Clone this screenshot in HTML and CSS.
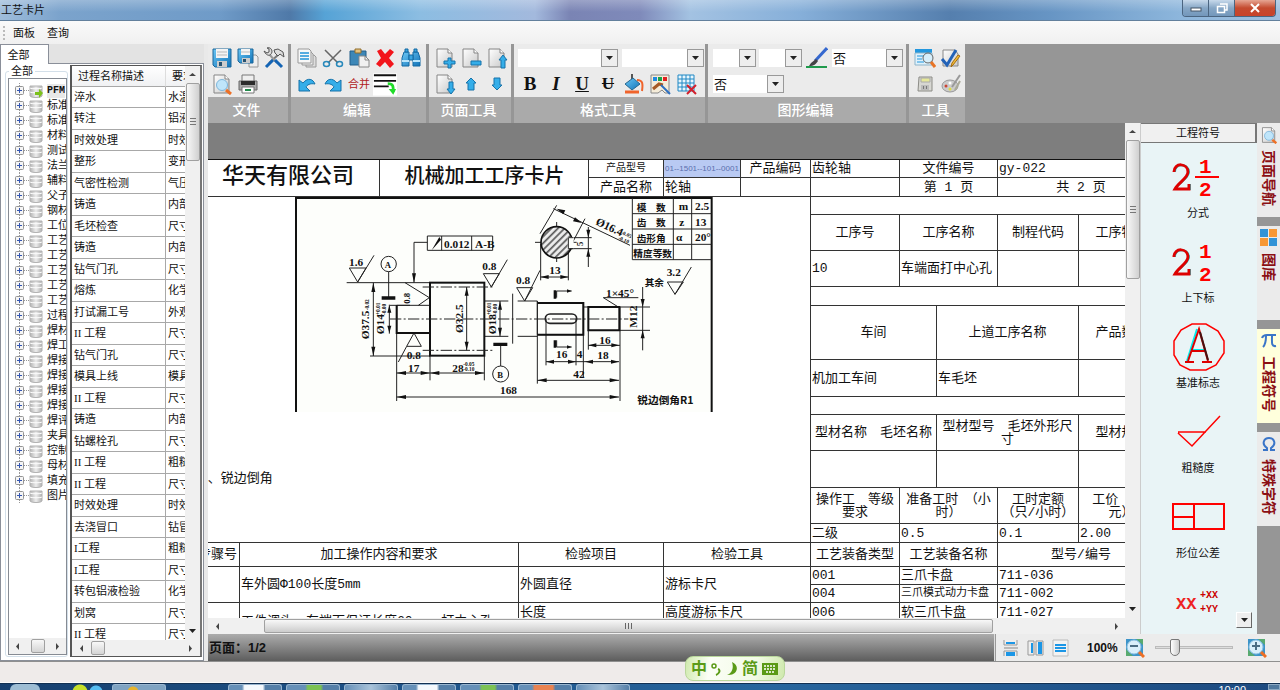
FILE: index.html
```html
<!DOCTYPE html>
<html lang="zh-CN">
<head>
<meta charset="utf-8">
<title>工艺卡片</title>
<link rel="stylesheet" href="styles.css">
</head>
<body>
<svg class="defs" width="0" height="0" aria-hidden="true">
  <defs>
    <linearGradient id="gBlue" x1="0" y1="0" x2="1" y2="1"><stop offset="0" stop-color="#6cc7f5"/><stop offset="1" stop-color="#1173b8"/></linearGradient>
    <linearGradient id="gPage" x1="0" y1="0" x2="1" y2="1"><stop offset="0" stop-color="#fff"/><stop offset="1" stop-color="#c9c9c9"/></linearGradient>
    <linearGradient id="gDb" x1="0" y1="0" x2="1" y2="0"><stop offset="0" stop-color="#b4b4b4"/><stop offset=".5" stop-color="#ededed"/><stop offset="1" stop-color="#b0b0b0"/></linearGradient>
    <pattern id="hatch" width="14" height="14" patternUnits="userSpaceOnUse" patternTransform="rotate(45)"><rect width="14" height="14" fill="#eee"/><path d="M5 0V14" stroke="#555" stroke-width="5"/></pattern>
    <symbol id="page" viewBox="0 0 22 22"><path d="M3 2h11l4 4v14H3z" fill="url(#gPage)" stroke="#858585"/><path d="M14 2v4h4" fill="#fff" stroke="#858585"/></symbol>
    <symbol id="save" viewBox="0 0 22 22"><path d="M2 2h18v18H4l-2-2z" fill="url(#gBlue)" stroke="#1c6699"/><path d="M5 2h12v9H5z" fill="#f4f4f4"/><path d="M6 5h10M6 8h10" stroke="#b9b9b9"/><path d="M6 14h10v6H6z" fill="#ccc"/><path d="M8 15h3v4H8z" fill="#285270"/></symbol>
    <symbol id="saveall" viewBox="0 0 22 22"><path d="M12 8h7l2 2v10h-9z" fill="#eee" stroke="#999"/><path d="M1 2h15v14H3l-2-2z" fill="url(#gBlue)" stroke="#1c6699"/><path d="M4 2h9v6H4z" fill="#f4f4f4"/><path d="M4 5h9" stroke="#bbb"/><path d="M5 11h8v5H5z" fill="#ccc"/><path d="M6 12h3v3H6z" fill="#285270"/></symbol>
    <symbol id="tools" viewBox="0 0 22 22"><path d="M15 8L6 16" stroke="#777" stroke-width="2"/><path d="M6 7l8 9" stroke="#999" stroke-width="2"/><path d="M12 13l7 7M10 13l-7 7" stroke="#1464b4" stroke-width="3"/><path d="M1 4l3 2 2-1V2L4 1c3-1 5 1 5 4-1 4-5 5-8-1z" fill="#ddd" stroke="#555"/><path d="M11 3l4-1 5 3 1 5-4-3-2 2-3-3z" fill="#ddd" stroke="#555"/></symbol>
    <symbol id="preview" viewBox="0 0 22 22"><use href="#page"/><circle cx="11" cy="12" r="5.500" fill="#bfe5fa" stroke="#7db6dc"/><path d="M15 17l5 4" stroke="#ee7026" stroke-width="3"/></symbol>
    <symbol id="print" viewBox="0 0 22 22"><path d="M5 2h12v7H5z" fill="#eee" stroke="#777"/><path d="M2 8h18v9H2z" fill="#aaa" stroke="#666"/><path d="M4 8h14v4H4z" fill="#2c2c2c"/><path d="M5 14h12v6H5z" fill="#fff" stroke="#777"/><path d="M8 16h6v2H8z" fill="#228b4b"/></symbol>
    <symbol id="copy" viewBox="0 0 22 22"><path d="M10 8h8l2 2v10H10z" fill="#ddd" stroke="#999"/><path d="M6 5h9l2 2v11H6z" fill="#eee" stroke="#999"/><path d="M2 2h11l2 2v12H2z" fill="#f8f8f8" stroke="#999"/><path d="M4 6h9M4 9h9M4 12h9" stroke="#2092d8" stroke-width="1.500"/></symbol>
    <symbol id="cut" viewBox="0 0 22 22"><path d="M3 3l13 13M19 3L6 16" stroke="#666" stroke-width="1.500"/><ellipse cx="4.500" cy="17" rx="3" ry="2.500" fill="none" stroke="#2889bb" stroke-width="1.500"/><ellipse cx="17.500" cy="17" rx="3" ry="2.500" fill="none" stroke="#2889bb" stroke-width="1.500"/></symbol>
    <symbol id="paste" viewBox="0 0 22 22"><path d="M2 4h16v14H2z" fill="#3d87b7" stroke="#225f8a"/><path d="M7 2h6v4H7z" fill="#e6c27d" stroke="#8e6d2c"/><path d="M11 9h6l4 4v7H11z" fill="#f1f1f1" stroke="#888"/><path d="M17 9v4h4" fill="none" stroke="#888"/></symbol>
    <symbol id="del" viewBox="0 0 22 22"><path d="M3 4l4-2 4 5 5-5 4 3-5 6 5 6-4 4-5-6-5 5-4-3 5-6z" fill="#f2151b"/></symbol>
    <symbol id="find" viewBox="0 0 22 22"><path d="M4 5h5v14H2v-8zM13 5h5l2 6v8h-7z" fill="url(#gBlue)" stroke="#1268a2"/><path d="M5 2h3v3H5zM14 2h3v3h-3zM9 8h4v5H9z" fill="#3ba6e0" stroke="#1268a2"/><path d="M2 14h7M13 14h7" stroke="#b8e4fb" stroke-width="2"/></symbol>
    <symbol id="undo" viewBox="0 0 22 22"><path d="M3 7v11h11l-4-4c1-2 4-4 9-3-2-5-7-7-12-1z" fill="#35aee9" stroke="#1673aa"/></symbol>
    <symbol id="redo" viewBox="0 0 22 22"><path d="M19 7v11H8l4-4c-1-2-4-4-9-3 2-5 7-7 12-1z" fill="#35aee9" stroke="#1673aa"/></symbol>
    <symbol id="wrap" viewBox="0 0 26 24"><path d="M0 0h26v24H0z" fill="#fff"/><path d="M1 2h24M1 8h24M1 14h16" stroke="#111" stroke-width="2"/><path d="M16 11c6 0 6 3 6 9" fill="none" stroke="#20dc29" stroke-width="3"/><path d="M17 17l5 6 3-6z" fill="#20dc29"/></symbol>
    <symbol id="up" viewBox="0 0 22 22"><path d="M11 5l5 5h-2v7H8v-7H6z" fill="#35aee9" stroke="#1673aa"/></symbol>
    <symbol id="down" viewBox="0 0 22 22"><path d="M11 17l5-5h-2V5H8v7H6z" fill="#35aee9" stroke="#1673aa"/></symbol>
    <symbol id="pgadd" viewBox="0 0 22 22"><use href="#page"/><path d="M14 11h3v3h4v3h-4v4h-3v-4h-4v-3h4z" fill="#35aee9" stroke="#1673aa"/></symbol>
    <symbol id="pgdel" viewBox="0 0 22 22"><use href="#page"/><path d="M11 14h10v4H11z" fill="#35aee9" stroke="#1673aa"/></symbol>
    <symbol id="pgup" viewBox="0 0 22 22"><use href="#page"/><path d="M17 8l4 5h-2v8h-4v-8h-2z" fill="#35aee9" stroke="#1673aa"/></symbol>
    <symbol id="pgdown" viewBox="0 0 22 22"><use href="#page"/><path d="M17 21l4-5h-2V9h-4v7h-2z" fill="#35aee9" stroke="#1673aa"/></symbol>
    <symbol id="fill" viewBox="0 0 22 22"><path d="M9 1v8" stroke="#555" stroke-width="2"/><path d="M2 11l8-6 7 6-8 6z" fill="url(#gBlue)" stroke="#27678f"/><path d="M14 7c6 0 6 4 5 11" fill="none" stroke="#f0642c" stroke-width="2"/><path d="M2 19h14" stroke="#f0642c" stroke-width="3"/></symbol>
    <symbol id="pick" viewBox="0 0 22 22"><path d="M2 2h18v18h-4l-3-3-4 3H2z" fill="#f5ecd9" stroke="#888"/><path d="M4 4h4v4H4z" fill="#208ae0"/><path d="M9 4h4v4H9z" fill="#17a34a"/><path d="M14 4h4v4h-4z" fill="#e02020"/><path d="M4 16l6-5 4 1" fill="none" stroke="#a65a25" stroke-width="3"/><path d="M12 12l9 9" stroke="#2c6fc2" stroke-width="2"/></symbol>
    <symbol id="griddel" viewBox="0 0 22 22"><path d="M3 2h16v16H3z" fill="#e8f6fd" stroke="#2088c4"/><path d="M3 6h16M3 10h16M3 14h16M7 2v16M11 2v16M15 2v16" stroke="#2088c4"/><path d="M12 12l9 9M21 12l-9 9" stroke="#d2202c" stroke-width="2"/></symbol>
    <symbol id="pen" viewBox="0 0 22 22"><path d="M21 1L9 14" stroke="#3568cf" stroke-width="3"/><path d="M10 12l-5 4-2 3c5 0 7-2 9-5z" fill="#444"/><path d="M0 20h21" stroke="#1f9a4c" stroke-width="2"/></symbol>
    <symbol id="search" viewBox="0 0 22 22"><path d="M1 2h17v4H1z" fill="#2397de"/><path d="M1 6h17v12H1z" fill="#dff1fb" stroke="#8db4ca"/><path d="M3 9h7M3 12h5M3 15h7" stroke="#2397de"/><circle cx="14" cy="11" r="5" fill="#d7effb" stroke="#666"/><path d="M17 15l4 5" stroke="#e87426" stroke-width="3"/></symbol>
    <symbol id="check" viewBox="0 0 22 22"><path d="M3 3h12l3 4v12H3z" fill="url(#gPage)" stroke="#888"/><path d="M2 12l5 6L16 3" fill="none" stroke="#2262b8" stroke-width="3"/><path d="M20 9l-7 9-2 2 1-4 6-8z" fill="#f3bd37" stroke="#a36b12"/></symbol>
    <symbol id="disk" viewBox="0 0 22 22"><path d="M5 4h13v14H4z" fill="#d7d7d2" stroke="#8b8b86"/><path d="M7 5h9v4H7z" fill="#e6e89a" stroke="#aaa"/><path d="M7 12h8v5H7z" fill="#bbb"/><path d="M9 13h1v3H9zM12 13h1v3h-1z" fill="#777"/></symbol>
    <symbol id="palette" viewBox="0 0 22 22"><ellipse cx="10" cy="13" rx="8" ry="6" fill="#ccc" stroke="#999"/><circle cx="6" cy="13" r="1.500" fill="#c43"/><circle cx="10" cy="16" r="1.500" fill="#dd4"/><circle cx="10" cy="10" r="1.500" fill="#fff"/><path d="M20 2L12 14" stroke="#999" stroke-width="2"/><path d="M20 8l-5 9" stroke="#aa9" stroke-width="2"/></symbol>
    <symbol id="db" viewBox="0 0 14 14"><path d="M1 2h12v10c-1 2-11 2-12 0z" fill="url(#gDb)" stroke="#b2b2b2"/><path d="M1 4c1 1 11 1 12 0M1 8c1 1 11 1 12 0" fill="none" stroke="#fff"/></symbol>
    <symbol id="plus" viewBox="0 0 15 15"><path d="M5.500 0v3M5.500 12v3" stroke="#999" stroke-dasharray="1 1"/><path d="M10 7.500h5" stroke="#999" stroke-dasharray="1 1"/><rect x="1.500" y="3.500" width="8" height="8" rx="1" fill="#f5f5f5" stroke="#949494"/><path d="M3 7.500h5M5.500 5v5" stroke="#3355b0"/></symbol>
    <symbol id="zoomout" viewBox="0 0 20 20"><path d="M1 1h17v17H1z" fill="#3d94c9"/><path d="M1 11v7h7zM11 1h7v6z" fill="#58aa70"/><circle cx="9" cy="9" r="7" fill="#d9effb" stroke="#8cc1e2"/><path d="M5 8h8" stroke="#4b6d84" stroke-width="2"/><path d="M14 14l5 5" stroke="#ee6f25" stroke-width="3"/></symbol>
    <symbol id="zoomin" viewBox="0 0 20 20"><use href="#zoomout"/><path d="M9 4v8" stroke="#4b6d84" stroke-width="2"/></symbol>
    <symbol id="al" viewBox="0 0 7 9"><path d="M5 1v7L2 4.500z" fill="#444"/></symbol>
    <symbol id="ar" viewBox="0 0 7 9"><path d="M2 1v7l3-3.500z" fill="#444"/></symbol>
    <symbol id="au" viewBox="0 0 9 6"><path d="M1 4h7L4.500 1z" fill="#444"/></symbol>
    <symbol id="ad" viewBox="0 0 9 6"><path d="M1 1h7L4.500 5z" fill="#222"/></symbol>
  </defs>
</svg>

<header class="titlebar">
  <h1>工艺卡片</h1>
  <div class="winbtns">
    <button class="wb" aria-label="最小化"><svg width="12" height="10"><rect x="1" y="5" width="10" height="3" fill="#fff" stroke="#456"/></svg></button>
    <button class="wb" aria-label="还原"><svg width="12" height="11"><path d="M4 1h7v6H9M1.500 3.500h7v6h-7z" fill="none" stroke="#fff" stroke-width="1.500"/></svg></button>
    <button class="wb close" aria-label="关闭"><svg width="12" height="10"><path d="M2 1l8 8M10 1L2 9" stroke="#fff" stroke-width="2"/></svg></button>
  </div>
</header>
<nav class="menubar"><span class="grip"></span><button>面板</button><button>查询</button></nav>

<main class="main">
  <aside class="side">
    <div class="sidetabs"><button class="sidetab">全部</button></div>
    <div class="sidebody">
      <fieldset class="group">
        <legend>全部</legend>
        <div class="treebox">
          <ul class="tree">
            <li><svg class="ex"><use href="#plus"/></svg><svg class="db"><use href="#db"/><path d="M6 8h4V5l4 4-4 5v-3H6z" fill="#7cc11c"/></svg><b>PFM</b></li>
            <li><svg class="ex"><use href="#plus"/></svg><svg class="db"><use href="#db"/></svg>标准</li>
            <li><svg class="ex"><use href="#plus"/></svg><svg class="db"><use href="#db"/></svg>标准</li>
            <li><svg class="ex"><use href="#plus"/></svg><svg class="db"><use href="#db"/></svg>材料</li>
            <li><svg class="ex"><use href="#plus"/></svg><svg class="db"><use href="#db"/></svg>测试</li>
            <li><svg class="ex"><use href="#plus"/></svg><svg class="db"><use href="#db"/></svg>法兰</li>
            <li><svg class="ex"><use href="#plus"/></svg><svg class="db"><use href="#db"/></svg>辅料</li>
            <li><svg class="ex"><use href="#plus"/></svg><svg class="db"><use href="#db"/></svg>父子</li>
            <li><svg class="ex"><use href="#plus"/></svg><svg class="db"><use href="#db"/></svg>钢材</li>
            <li><svg class="ex"><use href="#plus"/></svg><svg class="db"><use href="#db"/></svg>工位</li>
            <li><svg class="ex"><use href="#plus"/></svg><svg class="db"><use href="#db"/></svg>工艺</li>
            <li><svg class="ex"><use href="#plus"/></svg><svg class="db"><use href="#db"/></svg>工艺</li>
            <li><svg class="ex"><use href="#plus"/></svg><svg class="db"><use href="#db"/></svg>工艺</li>
            <li><svg class="ex"><use href="#plus"/></svg><svg class="db"><use href="#db"/></svg>工艺</li>
            <li><svg class="ex"><use href="#plus"/></svg><svg class="db"><use href="#db"/></svg>工艺</li>
            <li><svg class="ex"><use href="#plus"/></svg><svg class="db"><use href="#db"/></svg>过程</li>
            <li><svg class="ex"><use href="#plus"/></svg><svg class="db"><use href="#db"/></svg>焊材</li>
            <li><svg class="ex"><use href="#plus"/></svg><svg class="db"><use href="#db"/></svg>焊工</li>
            <li><svg class="ex"><use href="#plus"/></svg><svg class="db"><use href="#db"/></svg>焊接</li>
            <li><svg class="ex"><use href="#plus"/></svg><svg class="db"><use href="#db"/></svg>焊接</li>
            <li><svg class="ex"><use href="#plus"/></svg><svg class="db"><use href="#db"/></svg>焊接</li>
            <li><svg class="ex"><use href="#plus"/></svg><svg class="db"><use href="#db"/></svg>焊接</li>
            <li><svg class="ex"><use href="#plus"/></svg><svg class="db"><use href="#db"/></svg>焊评</li>
            <li><svg class="ex"><use href="#plus"/></svg><svg class="db"><use href="#db"/></svg>夹具</li>
            <li><svg class="ex"><use href="#plus"/></svg><svg class="db"><use href="#db"/></svg>控制</li>
            <li><svg class="ex"><use href="#plus"/></svg><svg class="db"><use href="#db"/></svg>母材</li>
            <li><svg class="ex"><use href="#plus"/></svg><svg class="db"><use href="#db"/></svg>填充</li>
            <li><svg class="ex"><use href="#plus"/></svg><svg class="db"><use href="#db"/></svg>图片</li>
          </ul>
          <div class="hbar"><svg width="7" height="9"><use href="#al"/></svg><i class="thumb small"></i><svg width="7" height="9"><use href="#ar"/></svg></div>
        </div>
      </fieldset>
      <section class="proc">
        <div class="proctop">
          <div class="procview">
            <table class="proctable">
              <colgroup><col class="pc1"><col class="pc2"></colgroup>
              <thead><tr><th>过程名称描述</th><th>要求</th></tr></thead>
              <tbody>
                <tr><td>淬水</td><td>水温</td></tr>
                <tr><td>转注</td><td>铝液</td></tr>
                <tr><td>时效处理</td><td>时效</td></tr>
                <tr><td>整形</td><td>变形</td></tr>
                <tr><td>气密性检测</td><td>气压</td></tr>
                <tr><td>铸造</td><td>内部</td></tr>
                <tr><td>毛坯检查</td><td>尺寸</td></tr>
                <tr><td>铸造</td><td>内部</td></tr>
                <tr><td>钻气门孔</td><td>尺寸</td></tr>
                <tr><td>熔炼</td><td>化学</td></tr>
                <tr><td>打试漏工号</td><td>外观</td></tr>
                <tr><td>II 工程</td><td>尺寸</td></tr>
                <tr><td>钻气门孔</td><td>尺寸</td></tr>
                <tr><td>模具上线</td><td>模具</td></tr>
                <tr><td>II 工程</td><td>尺寸</td></tr>
                <tr><td>铸造</td><td>内部</td></tr>
                <tr><td>钻螺栓孔</td><td>尺寸</td></tr>
                <tr><td>II 工程</td><td>粗糙</td></tr>
                <tr><td>II 工程</td><td>尺寸</td></tr>
                <tr><td>时效处理</td><td>时效</td></tr>
                <tr><td>去浇冒口</td><td>钻冒</td></tr>
                <tr><td>I工程</td><td>粗糙</td></tr>
                <tr><td>I工程</td><td>尺寸</td></tr>
                <tr><td>转包铝液检验</td><td>化学</td></tr>
                <tr><td>划窝</td><td>尺寸</td></tr>
                <tr><td>II 工程</td><td>尺寸</td></tr>
              </tbody>
            </table>
          </div>
          <div class="vbar"><svg width="9" height="6"><use href="#au"/></svg><i class="vthumb ptall"></i><svg class="end" width="9" height="6"><use href="#ad"/></svg></div>
        </div>
        <div class="hbar"><svg width="7" height="9"><use href="#al"/></svg><i class="thumb small"></i><svg class="right" width="7" height="9"><use href="#ar"/></svg></div>
      </section>
    </div>
  </aside>

  <div class="content">
    <div class="ribbon">
      <section class="rgroup w-file">
        <div class="tools">
          <div class="trow"><button class="tb" aria-label="保存"><svg><use href="#save"/></svg></button><button class="tb" aria-label="全部保存"><svg><use href="#saveall"/></svg></button><button class="tb" aria-label="设置"><svg><use href="#tools"/></svg></button></div>
          <div class="trow"><button class="tb" aria-label="预览"><svg><use href="#preview"/></svg></button><button class="tb" aria-label="打印"><svg><use href="#print"/></svg></button></div>
        </div>
        <h2>文件</h2>
      </section>
      <section class="rgroup w-edit">
        <div class="tools">
          <div class="trow"><button class="tb" aria-label="复制"><svg><use href="#copy"/></svg></button><button class="tb" aria-label="剪切"><svg><use href="#cut"/></svg></button><button class="tb" aria-label="粘贴"><svg><use href="#paste"/></svg></button><button class="tb" aria-label="删除"><svg><use href="#del"/></svg></button><button class="tb" aria-label="查找"><svg><use href="#find"/></svg></button></div>
          <div class="trow"><button class="tb" aria-label="撤销"><svg><use href="#undo"/></svg></button><button class="tb" aria-label="重做"><svg><use href="#redo"/></svg></button><button class="tb merge">合并</button><button class="tb" aria-label="换行"><svg class="wide"><use href="#wrap"/></svg></button></div>
        </div>
        <h2>编辑</h2>
      </section>
      <section class="rgroup w-page">
        <div class="tools">
          <div class="trow"><button class="tb" aria-label="添加页"><svg><use href="#pgadd"/></svg></button><button class="tb" aria-label="删除页"><svg><use href="#pgdel"/></svg></button><button class="tb" aria-label="上一页"><svg><use href="#pgup"/></svg></button></div>
          <div class="trow"><button class="tb" aria-label="下一页"><svg><use href="#pgdown"/></svg></button><button class="tb" aria-label="上移"><svg><use href="#up"/></svg></button><button class="tb" aria-label="下移"><svg><use href="#down"/></svg></button></div>
        </div>
        <h2>页面工具</h2>
      </section>
      <section class="rgroup w-format">
        <div class="tools">
          <div class="trow combos"><label class="combo c-100"><select aria-label="字体"><option></option></select><span><svg width="9" height="6"><use href="#ad"/></svg></span></label><label class="combo c-82"><select aria-label="字号"><option></option></select><span><svg width="9" height="6"><use href="#ad"/></svg></span></label></div>
          <div class="trow"><button class="tb txt">B</button><button class="tb txt it">I</button><button class="tb txt un">U</button><button class="tb txt st">U</button><button class="tb" aria-label="填充"><svg><use href="#fill"/></svg></button><button class="tb" aria-label="颜色"><svg><use href="#pick"/></svg></button><button class="tb" aria-label="删除表格"><svg><use href="#griddel"/></svg></button></div>
        </div>
        <h2>格式工具</h2>
      </section>
      <section class="rgroup w-shape">
        <div class="tools">
          <div class="trow combos"><label class="combo c-43"><select aria-label="线型"><option></option></select><span><svg width="9" height="6"><use href="#ad"/></svg></span></label><label class="combo c-43"><select aria-label="线宽"><option></option></select><span><svg width="9" height="6"><use href="#ad"/></svg></span></label><button class="tb" aria-label="线条颜色"><svg><use href="#pen"/></svg></button><label class="combo c-72"><select aria-label="箭头"><option>否</option></select><span><svg width="9" height="6"><use href="#ad"/></svg></span></label></div>
          <div class="trow combos"><label class="combo c-72"><select aria-label="填充"><option>否</option></select><span><svg width="9" height="6"><use href="#ad"/></svg></span></label></div>
        </div>
        <h2>图形编辑</h2>
      </section>
      <section class="rgroup w-tool">
        <div class="tools">
          <div class="trow"><button class="tb" aria-label="检索"><svg><use href="#search"/></svg></button><button class="tb" aria-label="校验"><svg><use href="#check"/></svg></button></div>
          <div class="trow"><button class="tb" aria-label="存盘"><svg><use href="#disk"/></svg></button><button class="tb" aria-label="调色板"><svg><use href="#palette"/></svg></button></div>
        </div>
        <h2>工具</h2>
      </section>
    </div>

    <div class="work">
      <div class="docarea">
        <div class="doctop">
          <div class="docview">
            <article class="page">
              <table class="card head">
                <colgroup><col class="k184"><col class="k209"><col class="k75"><col class="k77"><col class="k70"><col class="k89"><col class="k98"><col class="k167"></colgroup>
                <tr class="h18"><td rowspan="2" class="big">华天有限公司</td><td rowspan="2" class="big t2">机械加工工序卡片</td><td class="c s10">产品型号</td><td class="sel">01--1501--101--0001</td><td class="c">产品编码</td><td>齿轮轴</td><td class="c">文件编号</td><td>gy-022</td></tr>
                <tr class="h19"><td class="c">产品名称</td><td>轮轴</td><td></td><td></td><td class="c">第 1 页</td><td class="c">共 2 页</td></tr>
              </table>
              <div class="pagebody">
                <div class="pleft">
                  <div class="figure">
                    <svg class="drawing" viewBox="15 20 1254 645" role="img" aria-label="齿轮轴零件图">
                      <rect x="15" y="20" width="1254" height="645" fill="#fdfefb"/>
                      <path d="M18 665V23H1265V665" fill="none" stroke="#111" stroke-width="6"/>
                      <g fill="none" stroke="#222" stroke-width="3">
                        <path d="M1027 23V208H1265M1027 70H1265M1027 116H1265M1027 162H1265M1150 23V208M1205 23V208"/>
                        <path d="M170 277H420M240 497H420M250 277V497M298 343V430M320 427V632M320 385V345H420M320 345V428H420M420 497V570M583 497V570M583 332H655M683 332H742M583 438H655M683 438H742M742 332V580M742 338H880V433H742V332M880 350H990M990 350V632M880 433V560M895 420V478M768 385V525M858 385V525"/>
                        <path d="M320 548H583M742 570H987M320 620H987M768 514H987M895 465H990M630 332V438M530 290V480M1058 290V480M990 350H1080M990 420H1080"/>
                        <path d="M372 277V156H412M412 137H608V180H412ZM455 137V180M545 137V180"/>
                        <path d="M178 233H228L203 275ZM203 275L252 195M580 250H628L604 290ZM604 290L652 208M680 292H728L704 332ZM704 332L750 240M1132 275H1180L1155 312ZM1155 312L1204 230M350 468H394L372 428ZM350 468L325 515M345 277L418 322L385 345M300 345H360"/>
                        <path d="M750 130L800 45M790 55L1020 165M838 175L885 85M752 160V270M835 160V270M752 260H835M835 142H905M835 175H905M895 110V230M940 322H1045M940 322L985 350M668 310V460" />
                        <path d="M800 322V302H845M800 450V470H845"/>
                        <circle cx="296" cy="221" r="23"/><circle cx="632" cy="551" r="24"/><path d="M296 244V322M632 462V527"/>
                        <rect x="766" y="371" width="94" height="28" rx="14" stroke-width="5"/>
                      </g>
                      <path d="M275 323H316M610 462H652" stroke="#111" stroke-width="10"/>
                      <path d="M795 300V325M795 450V472" stroke="#111" stroke-width="8"/>
                      <rect x="420" y="277" width="163" height="219" fill="none" stroke="#111" stroke-width="6"/>
                      <path d="M320 345V428H420M742 338H880V433H742M895 350H988V420H895Z" fill="none" stroke="#111" stroke-width="6"/>
                      <path d="M300 386H1015M398 290H608M398 480H608M735 156H860M800 95V215" fill="none" stroke="#222" stroke-width="3" stroke-dasharray="34 7 6 7"/>
                      <circle cx="800" cy="156" r="47" fill="url(#hatch)" stroke="#111" stroke-width="5"/>
                      <path d="M833 140h18v34h-18z" fill="#fdfefb"/><path d="M850 142h-15v33h15" fill="none" stroke="#222" stroke-width="3"/>
                      <g fill="#111">
                        <path d="M320 548l28-6v12zM420 548l-28-6v12zM420 548l28-6v12zM583 548l-28-6v12zM320 620l28-6v12zM987 620l-28-6v12zM742 570l28-6v12zM987 570l-28-6v12zM768 514l24-6v12zM858 514l-24-6v12zM885 514l24-6v12zM987 514l-24-6v12zM895 465l24-6v12zM988 465l-24-6v12zM752 260l24-6v12zM835 260l-24-6v12z"/>
                        <path d="M250 277l-6 28h12zM250 497l-6-28h12zM372 277l-6-28h12zM530 290l-6 26h12zM530 480l-6-26h12zM630 332l-6 26h12zM630 438l-6-26h12zM298 345l-6 22h12zM298 428l-6-22h12zM895 142l-6-24h12zM895 175l-6 24h12zM1058 350l-6-24h12zM1058 420l-6 24h12zM425 180l28-32-5-8zM800 55l26 5-6 12zM875 98l-26-5 6-12zM845 302l-14-5v10zM845 470l-14-5v10z"/>
                      </g>
                      <g class="dim">
                        <text x="177" y="226">1.6</text><text x="284" y="232" class="sm">A</text><text x="462" y="174">0.012</text><text x="555" y="172">A-B</text><text x="577" y="238">0.8</text><text x="678" y="280">0.8</text><text x="778" y="252">13</text><text x="1130" y="257">3.2</text><text x="350" y="507">0.8</text><text x="354" y="544">17</text><text x="487" y="544">28</text><text x="520" y="526" class="tiny">-0.05</text><text x="520" y="542" class="tiny">-0.10</text><text x="622" y="562" class="sm">B</text><text x="798" y="504">16</text><text x="860" y="504">4</text><text x="922" y="506">18</text><text x="928" y="460">16</text><text x="850" y="562">42</text><text x="630" y="612">168</text><text x="948" y="320">1×45°</text>
                        <text transform="translate(236 447) rotate(-90)">Ø37.5</text><text transform="translate(236 360) rotate(-90)" class="tiny">-0.02</text><text transform="translate(283 432) rotate(-90)">Ø14</text><text transform="translate(270 374) rotate(-90)" class="tiny">+0.01</text><text transform="translate(288 374) rotate(-90)" class="tiny">-0.00</text><text transform="translate(520 428) rotate(-90)">Ø32.5</text><text transform="translate(618 432) rotate(-90)">Ø18</text><text transform="translate(604 374) rotate(-90)" class="tiny">+0.01</text><text transform="translate(622 374) rotate(-90)" class="tiny">-0.00</text><text transform="translate(1042 412) rotate(-90)">M12</text><text transform="translate(360 340) rotate(-90)" class="sm">0.8</text><text transform="translate(880 167) rotate(-90)" class="sm">5</text><text transform="translate(915 102) rotate(25)">Ø16.4</text><text transform="translate(992 130) rotate(25)" class="tiny">-0.05</text><text transform="translate(984 146) rotate(25)" class="tiny">-0.10</text>
                        <text x="1215" y="60">2.5</text><text x="1215" y="106">13</text><text x="1215" y="152">20°</text><text x="1166" y="60">m</text><text x="1168" y="106">z</text><text x="1158" y="152">α</text>
                      </g>
                      <g class="cn"><text x="1040" y="62">模　数</text><text x="1040" y="108">齿　数</text><text x="1040" y="154">齿形角</text><text x="1030" y="200">精度等数</text><text x="1064" y="286">其余</text><text x="1042" y="642" class="lg">锐边倒角R1</text></g>
                    </svg>
                  </div>
                  <p class="note">1、锐边倒角</p>
                </div>
                <table class="card spec">
                  <colgroup><col class="k89"><col class="k37"><col class="k61"><col class="k81"><col class="k86"></colgroup>
                  <tr class="h18"><td colspan="5"></td></tr>
                  <tr class="h36"><td class="c">工序号</td><td class="c" colspan="2">工序名称</td><td class="c">制程代码</td><td class="c">工序特性</td></tr>
                  <tr class="h36"><td>10</td><td colspan="2">车端面打中心孔</td><td></td><td></td></tr>
                  <tr class="h19"><td colspan="5"></td></tr>
                  <tr class="h54"><td class="c" colspan="2">车间</td><td class="c" colspan="2">上道工序名称</td><td class="c">产品数量</td></tr>
                  <tr class="h37"><td colspan="2">机加工车间</td><td colspan="2">车毛坯</td><td></td></tr>
                  <tr class="h18"><td colspan="5"></td></tr>
                  <tr class="h36"><td class="c" colspan="2">型材名称　毛坯名称</td><td class="c" colspan="2">型材型号　毛坯外形尺<br>寸</td><td class="c">型材规格</td></tr>
                  <tr class="h37"><td colspan="2"></td><td colspan="2"></td><td></td></tr>
                  <tr class="h36"><td class="c">操作工　等级<br>要求</td><td class="c" colspan="2">准备工时　（小<br>时）</td><td class="c">工时定额<br>（只/小时）</td><td class="c">工价　　（<br>元）</td></tr>
                  <tr class="h19"><td>二级</td><td colspan="2">0.5</td><td>0.1</td><td>2.00</td></tr>
                </table>
              </div>
              <div class="pagebody">
                <table class="card steps">
                  <colgroup><col class="k44"><col class="k279"><col class="k145"><col class="k147"></colgroup>
                  <tr class="h24"><td class="c">步骤号</td><td class="c">加工操作内容和要求</td><td class="c">检验项目</td><td class="c">检验工具</td></tr>
                  <tr class="h36"><td></td><td>车外圆Φ100长度5mm</td><td>外圆直径</td><td>游标卡尺</td></tr>
                  <tr class="h37"><td></td><td>工件调头、车端面保证长度60mm、打中心孔</td><td class="top">长度</td><td class="top">高度游标卡尺</td></tr>
                </table>
                <table class="card equip">
                  <colgroup><col class="k89"><col class="k98"><col class="k167"></colgroup>
                  <tr class="h24"><td class="c">工艺装备类型</td><td class="c">工艺装备名称</td><td class="c">型号/编号</td></tr>
                  <tr class="h18"><td>001</td><td>三爪卡盘</td><td>711-036</td></tr>
                  <tr class="h18"><td>004</td><td class="s11">三爪模式动力卡盘</td><td>711-002</td></tr>
                  <tr class="h19"><td>006</td><td>软三爪卡盘</td><td>711-027</td></tr>
                </table>
              </div>
            </article>
          </div>
          <div class="vbar"><svg width="9" height="6"><use href="#au"/></svg><i class="vthumb dtall"></i><svg class="end" width="9" height="6"><use href="#ad"/></svg></div>
        </div>
        <div class="hbar dochbar"><svg width="7" height="9"><use href="#al"/></svg><i class="thumb long"></i><svg class="right" width="7" height="9"><use href="#ar"/></svg></div>
      </div>

      <aside class="symbols">
        <h3>工程符号</h3>
        <div class="symlist">
          <button class="sym"><svg viewBox="0 0 60 60"><path d="M7 26c0-9 14-9 14 0 0 6-9 10-14 17h15v-5" fill="none" stroke="#0ee" stroke-width="2"/><path d="M6 26c0-10 14-9 14 0 0 6-9 10-13 17h14v-5" fill="none" stroke="#d00" stroke-width="3"/><text x="31" y="27" class="s-mid">1</text><text x="31" y="50" class="s-mid">2</text><path d="M27 31h24" stroke="#f00" stroke-width="2"/></svg>分式</button>
          <button class="sym"><svg viewBox="0 0 60 60"><path d="M7 26c0-9 14-9 14 0 0 6-9 10-14 17h15v-5" fill="none" stroke="#0ee" stroke-width="2"/><path d="M6 26c0-10 14-9 14 0 0 6-9 10-13 17h14v-5" fill="none" stroke="#d00" stroke-width="3"/><text x="31" y="27" class="s-mid">1</text><text x="31" y="50" class="s-mid">2</text></svg>上下标</button>
          <button class="sym"><svg viewBox="0 0 60 60"><path d="M24 8h14l12 7 6 10v12l-8 12-10 5H22l-10-5-6-10V25l7-11z" fill="none" stroke="#f00" stroke-width="1.500"/><path d="M19 45L29 13M24 34h13" fill="none" stroke="#0ee" stroke-width="2"/><path d="M17 46h9M34 46h10M20 45L31 13l9 32M24 35h13" fill="none" stroke="#d00" stroke-width="2"/><path d="M32 16l8 28" stroke="#411" stroke-width="2"/></svg>基准标志</button>
          <button class="sym"><svg viewBox="0 0 60 60"><path d="M10 31h28M10 32l14 13 28-30" fill="none" stroke="#f00" stroke-width="1.500"/></svg>粗糙度</button>
          <button class="sym"><svg viewBox="0 0 60 60"><path d="M5 18h51v25H5zM26 18v25M5 31h21" fill="none" stroke="#f00" stroke-width="2"/></svg>形位公差</button>
          <button class="sym"><svg viewBox="0 0 60 60"><text x="8" y="38" class="s-xx">XX</text><text x="32" y="27" class="s-x">+XX</text><text x="32" y="41" class="s-x">+YY</text></svg></button>
        </div>
        <button class="scrolldown" aria-label="向下滚动"><svg width="9" height="6"><use href="#ad"/></svg></button>
      </aside>
      <nav class="vtabs">
        <button class="vtab"><svg width="18" height="18"><use href="#preview"/></svg><span>页面导航</span></button>
        <button class="vtab"><svg width="18" height="18"><path d="M0 0h8v8H0zM9 9h8v8H9z" fill="#3293d6"/><path d="M9 0h8v8H9zM0 9h8v8H0z" fill="#f79734"/></svg><span>图库</span></button>
        <button class="vtab on"><svg width="18" height="18"><path d="M2 6c1-3 3-3 5-3h9M6 4c0 6-1 9-3 11M12 4c0 6-1 11 4 10" fill="none" stroke="#3a75c8" stroke-width="2"/></svg><span>工程符号</span></button>
        <button class="vtab"><svg width="18" height="18"><path d="M3 15h4v-2C1 9 4 3 9 3s8 6 2 10v2h4" fill="none" stroke="#3a75c8" stroke-width="2"/></svg><span>特殊字符</span></button>
      </nav>
    </div>

    <footer class="docstatus">
      <div class="pageno">页面：1/2</div>
      <div class="zoomarea">
        <button class="vm" aria-label="连续视图"><svg width="18" height="18"><path d="M2 1v5h13V1M2 17v-5h13v5" fill="#eee" stroke="#999"/><path d="M4 3h9v2H4zM4 13h9v4H4z" fill="#1b96e6"/><path d="M2 9h14" stroke="#888"/></svg></button>
        <button class="vm" aria-label="双页视图"><svg width="18" height="18"><path d="M1 2h6v14H1zM9 2h7v14H9z" fill="#eee" stroke="#999"/><path d="M4 4h2v10H4zM11 3h4v12h-4z" fill="#1b96e6"/></svg></button>
        <button class="vm" aria-label="单页视图"><svg width="18" height="18"><path d="M1 1h15v16H1z" fill="#f3f3f3" stroke="#bbb"/><path d="M3 6h11M3 9h11M3 12h11" stroke="#1b96e6" stroke-width="2"/></svg></button>
        <output class="pct">100%</output>
        <button class="vm" aria-label="缩小"><svg width="20" height="20"><use href="#zoomout"/></svg></button>
        <input class="slider" type="range" min="0" max="100" value="21" aria-label="缩放">
        <button class="vm" aria-label="放大"><svg width="20" height="20"><use href="#zoomin"/></svg></button>
      </div>
    </footer>
  </div>
</main>

<div class="strip">
  <div class="ime"><span>中</span><svg width="12" height="16" viewBox="0 0 12 16"><circle cx="4" cy="5" r="2" fill="none" stroke="#5a9a16" stroke-width="1.500"/><path d="M8 8c3 1 1 5-2 6" fill="none" stroke="#5a9a16" stroke-width="2"/></svg><svg width="14" height="16" viewBox="0 0 14 16"><path d="M7 1c8 3 6 14-5 13 5-2 7-7 5-13z" fill="#5a9a16"/></svg><span>简</span><svg width="18" height="14" viewBox="0 0 18 14"><rect x="1" y="1" width="16" height="12" fill="#5a9a16"/><path d="M3 4h12M3 7h12M5 10h8" stroke="#fff" stroke-width="1.500" stroke-dasharray="2 1"/></svg></div>
</div>
<footer class="taskbar">
  <div class="start"></div><div class="quick"></div>
  <div class="tbtn y"></div><div class="tbtn n"></div><div class="tbtn w"></div><div class="tbtn g"></div><div class="tbtn g2"></div><div class="tbtn b"></div><div class="tbtn e"></div><div class="tbtn o"></div><div class="tbtn c2"></div>
  <time>10:00</time><div class="desk"></div>
</footer>
</body>
</html>
```
FILE: styles.css
```css
* { box-sizing: border-box; }
html, body { margin: 0; height: 100%; }
body {
  display: flex; flex-direction: column; height: 100vh; overflow: hidden;
  background: #f0f0f0; color: #111;
  font: 11px/15px "Liberation Sans", "Noto Sans CJK SC", sans-serif;
}
h1, h2, h3, p, ul { margin: 0; padding: 0; font-weight: normal; }
button { margin: 0; padding: 0; border: 0; background: none; font: inherit; color: inherit; }
svg { display: block; flex: none; }
.defs { position: absolute; }

/* window frame */
.titlebar {
  flex: none; height: 21px; display: flex; justify-content: space-between; align-items: flex-start;
  border-bottom: 1px solid #63809d; overflow: hidden;
  background:
    linear-gradient(rgba(255,255,255,.25), transparent 60%),
    linear-gradient(90deg, #9fbddb 0, #7ba3cc 60px, #6f9bc8 220px, #4f79a8 290px, #56a3d6 325px, #8cbde2 420px, #a3b9dd 535px, #7a84b4 570px, #7f8aba 640px, #a3c2e2 690px, #86afd9 800px, #557fae 950px, #6795c4 1050px, #8db6dc 1180px, #a0c0df);
}
.titlebar h1 { font-size: 11px; line-height: 20px; padding-left: 1px; }
.winbtns { display: flex; margin-right: 4px; border: 1px solid #4b6580; border-top: 0; border-radius: 0 0 4px 4px; overflow: hidden; }
.wb { width: 26px; height: 16px; display: flex; align-items: center; justify-content: center; background: linear-gradient(#c7d9eb, #87a7c6 50%, #7397bb); border-right: 1px solid #4b6580; }
.wb.close { width: 40px; border-right: 0; background: linear-gradient(#e6a593, #c44a2f 50%, #c9432a); }
.menubar { flex: none; height: 23px; display: flex; align-items: center; gap: 12px; padding: 0 3px; background: linear-gradient(#fafafa, #f0f0f0); }
.menubar .grip { width: 2px; height: 14px; margin-right: -4px; background: repeating-linear-gradient(#bbb 0 2px, transparent 2px 4px); }
.menubar button { height: 21px; line-height: 20px; }

.main { flex: 1; min-height: 0; display: flex; }

/* side panels */
.side { flex: none; width: 208px; display: flex; flex-direction: column; padding-right: 4px; background: #e9e9e9; }
.sidetabs { flex: none; height: 20px; background: #e3e3e3; border-bottom: 1px solid #8a8f99; }
.sidetab { width: 49px; height: 20px; background: #fff; border: 1px solid #8a8f99; border-bottom: 0; padding-right: 12px; line-height: 18px; }
.sidebody { flex: 1; min-height: 0; display: flex; gap: 2px; padding: 1px 1px 3px 4px; background: #fff; border: 1px solid #8a8f99; border-top: 0; }
.group { flex: none; width: 63px; min-width: 0; margin: 0; padding: 0 1px 1px 2px; border: 1px solid #d3dfe9; border-radius: 3px; display: flex; }
.group legend { margin-left: 1px; padding: 0 2px; line-height: 13px; }
.treebox { width: 59px; height: 100%; border: 1px solid #868b93; display: flex; flex-direction: column; }
.tree { flex: 1; min-height: 0; list-style: none; overflow: hidden; padding: 4px 0 0 5px; }
.tree li { height: 15px; display: flex; align-items: center; white-space: nowrap; }
.tree b { background: #e8e8e8; font: bold 10px/14px "Liberation Mono", monospace; }
.tree .ex { width: 15px; height: 15px; overflow: hidden; }
.tree .db { width: 14px; height: 14px; margin-right: 4px; }
.hbar, .vbar { display: flex; align-items: center; background: #f0f0f0; }
.hbar { flex: none; height: 16px; padding: 0 6px; gap: 6px; }
.vbar { flex: none; width: 15px; flex-direction: column; padding: 6px 0; gap: 5px; }
.right { margin-left: auto; }
.end { margin-top: auto; }
.thumb { height: 14px; border: 1px solid #a0a0a0; border-radius: 2px; background: linear-gradient(#f8f8f8, #d4d4d4); }
.thumb.small { width: 14px; }
.treebox .hbar { justify-content: space-between; padding: 0 5px; }
.vthumb { width: 14px; border: 1px solid #a0a0a0; border-radius: 2px; background: repeating-linear-gradient(#777 0 1px, transparent 1px 3px) center / 6px 8px no-repeat, linear-gradient(90deg, #f8f8f8, #d0d0d0); }
.ptall { height: 78px; }
.dtall { height: 139px; }
.proc { flex: 1; min-width: 0; display: flex; flex-direction: column; border: 1px solid #555; border-right: 2px solid #777; border-left: 2px solid #555; }
.proctop { flex: 1; min-height: 0; display: flex; }
.procview { flex: 1; min-width: 0; overflow: hidden; background: #fff; }
.proctable { table-layout: fixed; width: 153px; border-collapse: separate; border-spacing: 0; font-family: "Liberation Serif", "Noto Sans CJK SC", serif; }
.pc1 { width: 94px; }
.pc2 { width: 59px; }
.proctable th, .proctable td { padding: 0 0 0 2px; height: 21px; text-align: left; white-space: nowrap; font-weight: normal; border-right: 1px solid #a8a8a8; border-bottom: 1px solid #a8a8a8; }
.proctable tr:nth-child(even) td { height: 22px; }
.proctable th { padding-left: 6px; background: linear-gradient(#fff, #f0f1f3); border-right-color: #ddd; }

/* ribbon */
.content { flex: 1; min-width: 0; display: flex; flex-direction: column; }
.ribbon { flex: none; height: 79px; display: flex; gap: 3px; background: #969696; }
.rgroup { flex: none; display: flex; flex-direction: column; background: #ebebeb; }
.w-file { width: 80px; }
.w-edit { width: 135px; }
.w-page { width: 82px; }
.w-format { width: 191px; }
.w-shape { width: 198px; }
.w-tool { width: 56px; }
.tools { flex: 1; padding: 1px 1px 0 1px; }
.w-edit .tools, .w-page .tools { padding-left: 3px; }
.w-format .tools { padding-left: 3px; }
.w-shape .tools { padding-left: 4px; }
.w-tool .tools { padding-left: 3px; }
.trow { height: 26px; display: flex; align-items: center; }
.tb { flex: none; width: 26px; height: 26px; display: flex; align-items: center; justify-content: center; }
.tb svg { width: 22px; height: 22px; }
.tb svg.wide { width: 24px; height: 23px; }
.merge { color: #b01820; font-size: 11px; }
.txt { font: bold 19px "Liberation Serif", serif; }
.it { font-style: italic; }
.un { text-decoration: underline; }
.st { text-decoration: line-through; font-size: 17px; }
.combos { gap: 4px; padding-left: 1px; }
.w-shape .combos { gap: 3px; }
.rgroup h2 { height: 26px; background: #aaa; color: #fff; font: 500 14px/24px "Noto Sans CJK SC", sans-serif; text-align: center; padding-right: 3px; }
.combo { flex: none; display: grid; height: 18px; }
.combo select { grid-area: 1 / 1; appearance: none; width: 100%; height: 18px; border: 0; border-radius: 0; padding: 0 0 0 1px; background: #fff; color: #111; font: 13px/16px "Noto Sans CJK SC", sans-serif; }
.combo span { grid-area: 1 / 1; justify-self: end; width: 17px; height: 18px; display: flex; align-items: center; justify-content: center; background: #eee; border: 1px solid #999; pointer-events: none; }
.c-100 { width: 100px; }
.c-82 { width: 82px; }
.c-43 { width: 43px; }
.c-72 { width: 71px; }
.w-shape .tb { width: 24px; }

/* document */
.work { flex: 1; min-height: 0; display: flex; }
.docarea { flex: 1; min-width: 0; display: flex; flex-direction: column; }
.doctop { flex: 1; min-height: 0; display: flex; }
.docview { flex: 1; min-width: 0; overflow: hidden; background: #7e7e7e; padding-top: 36px; }
.page { width: 969px; margin-left: -12px; background: #fff; border-top: 1px solid #111; font: 13px/13px "Liberation Mono", "Noto Sans CJK SC", monospace; }
.card { flex: none; table-layout: fixed; border-collapse: separate; border-spacing: 0; }
.card td { padding: 0 0 0 1px; border-right: 1px solid #333; border-bottom: 1px solid #333; white-space: nowrap; overflow: hidden; }
.card .c { text-align: center; padding: 0; }
.card .top { vertical-align: top; padding-top: 3px; }
.card .big { text-align: center; font-size: 22px; line-height: 30px; font-weight: 500; }
.card .t2 { font-size: 20px; }
.card .s10 { font-size: 10px; }
.card .s11 { font-size: 11px; }
.card .sel { background: #b9caf3; color: #5a6fae; font: 8px/13px "Liberation Sans", sans-serif; }
.head { width: 969px; }
.spec, .equip { width: 354px; }
.steps { width: 615px; }
.k184 { width: 184px; } .k209 { width: 209px; } .k75 { width: 75px; } .k77 { width: 77px; } .k70 { width: 70px; }
.k89 { width: 89px; } .k98 { width: 98px; } .k167 { width: 167px; } .k37 { width: 37px; } .k61 { width: 61px; }
.k81 { width: 81px; } .k86 { width: 86px; } .k44 { width: 44px; } .k279 { width: 279px; } .k145 { width: 145px; } .k147 { width: 147px; }
.h18 td { height: 18px; } .h19 td { height: 19px; } .h24 td { height: 24px; } .h36 td { height: 36px; } .h37 td { height: 37px; } .h54 td { height: 54px; }
.pagebody { display: flex; align-items: flex-start; }
.pleft { align-self: stretch; width: 615px; border-right: 1px solid #333; border-bottom: 1px solid #333; }
.figure { padding-left: 99px; }
.drawing { width: 418px; height: 215px; }
.dim text { font: bold 34px "Liberation Serif", serif; fill: #111; }
.dim .sm { font-size: 26px; }
.dim .tiny { font-size: 16px; }
.cn text { font: bold 29px "Noto Sans CJK SC", sans-serif; fill: #111; }
.cn .lg { font-size: 32px; }
.note { padding: 59px 0 0 4px; line-height: 15px; }
.dochbar { padding-right: 20px; gap: 43px; }
.thumb.long { flex: 1; margin-right: 77px; background: repeating-linear-gradient(90deg, #666 0 1px, transparent 1px 3px) center / 8px 6px no-repeat, linear-gradient(#f8f8f8, #ccc); }

/* symbol palette */
.symbols { flex: none; width: 117px; display: flex; flex-direction: column; position: relative; background: #e9f4f6; border-left: 1px solid #ccc; overflow: hidden; }
.symbols h3 { flex: none; height: 20px; font-size: 11px; line-height: 18px; text-align: center; background: #f0f0f0; border: solid #777; border-width: 1px 2px 1px 0; }
.symlist { flex: 1; min-height: 0; overflow: hidden; display: flex; flex-direction: column; padding-top: 1px; }
.sym { flex: none; height: 85px; padding-top: 2px; display: flex; flex-direction: column; align-items: center; line-height: 15px; padding-right: 2px; }
.sym svg { width: 60px; height: 60px; }
.s-mid { font: bold 21px "Liberation Mono", monospace; fill: #f00; }
.s-xx { font: bold 17px "Liberation Mono", monospace; fill: #e22; }
.s-x { font: bold 10px "Liberation Mono", monospace; fill: #c00; }
.scrolldown { position: absolute; right: 5px; bottom: 6px; width: 16px; height: 16px; display: flex; align-items: center; justify-content: center; background: #eee; border: 1px solid #fff; border-right-color: #666; border-bottom-color: #666; }
.vtabs { flex: none; width: 23px; display: flex; flex-direction: column; gap: 9px; background: #969696; }
.vtab { flex: none; height: 94px; display: flex; flex-direction: column; align-items: center; gap: 6px; padding: 3px 0 0; background: #ebebeb; color: #8b0f14; font-size: 14px; font-weight: bold; }
.vtab.on { background: #ffffdc; }
.vtab span { writing-mode: vertical-rl; text-orientation: sideways; line-height: 20px; }

/* status */
.docstatus { flex: none; height: 27px; display: flex; background: #ececec; }
.pageno { flex: 1; padding-left: 1px; background: linear-gradient(#acacac, #5d5d5d); border-right: 1px solid #ddd; font: bold 13px/27px "Liberation Sans", "Noto Sans CJK SC", sans-serif; color: #111; }
.zoomarea { flex: none; width: 285px; display: flex; align-items: center; padding-left: 6px; border-left: 1px solid #999; }
.vm { flex: none; width: 25px; height: 24px; display: flex; align-items: center; }
.pct { width: 40px; padding-left: 10px; font: bold 12px "Liberation Sans", sans-serif; margin-right: 8px; }
.slider { appearance: none; width: 78px; height: 20px; margin: 0 14px 0 5px; background: none; }
.slider::-webkit-slider-runnable-track { height: 3px; background: #ddd; border: 1px solid #bbb; }
.slider::-webkit-slider-thumb { appearance: none; width: 10px; height: 17px; margin-top: -8px; border: 1px solid #777; border-radius: 2px 2px 5px 5px; background: linear-gradient(90deg, #fff, #ccc); }
.strip { flex: none; height: 22px; position: relative; background: #efebea; border-top: 1px solid #8f8f8f; border-bottom: 1px solid #fafafa; }
.ime { position: absolute; left: 685px; bottom: 1px; width: 100px; height: 25px; display: flex; align-items: center; justify-content: center; gap: 3px; border: 1px solid #b9d79b; border-radius: 8px; background: linear-gradient(100deg, #d0eaae, #fbfef6 25%, #f2fae6 70%, #cfe9ad); color: #5a9a16; font-size: 16px; font-weight: bold; }
.taskbar { flex: none; height: 7px; display: flex; gap: 4px; overflow: hidden; background: linear-gradient(90deg, #17406f, #20588f 40%, #28669e 60%, #1d4a80); border-top: 1px solid #123052; }
.start { width: 30px; margin-left: 10px; border-radius: 15px 15px 0 0; background: #9dbdd4; }
.quick { width: 60px; margin-left: 4px; background: radial-gradient(circle at 32px 8px, #c6e02a 7px, transparent 8px), radial-gradient(circle at 48px 8px, #55bdf2 6px, transparent 7px); }
.tbtn { flex: none; width: 54px; border: 1px solid #99b6d0; border-bottom: 0; border-radius: 3px 3px 0 0; background: linear-gradient(90deg, #6690b8, #a9c3da, #557fa8); }
.tbtn.n { border-color: transparent; background: none; }
.tbtn.y { background: radial-gradient(circle at 20px 7px, #e6b42e 5px, #7fa3c2 6px); }
.tbtn.w, .tbtn.b { background: linear-gradient(90deg, #6690b8 25%, #f4f8fc 30% 65%, #557fa8 70%); }
.tbtn.g, .tbtn.e { background: linear-gradient(90deg, #6690b8 35%, #7cc254 40% 65%, #557fa8 70%); }
.tbtn.o { background: linear-gradient(90deg, #6690b8 25%, #e98352 30% 65%, #557fa8 70%); }
.taskbar time { margin-left: auto; margin-right: 18px; color: #fff; font-size: 11px; line-height: 12px; }
.desk { width: 12px; border: 1px solid #8ba8c2; background: #50789e; }
```
